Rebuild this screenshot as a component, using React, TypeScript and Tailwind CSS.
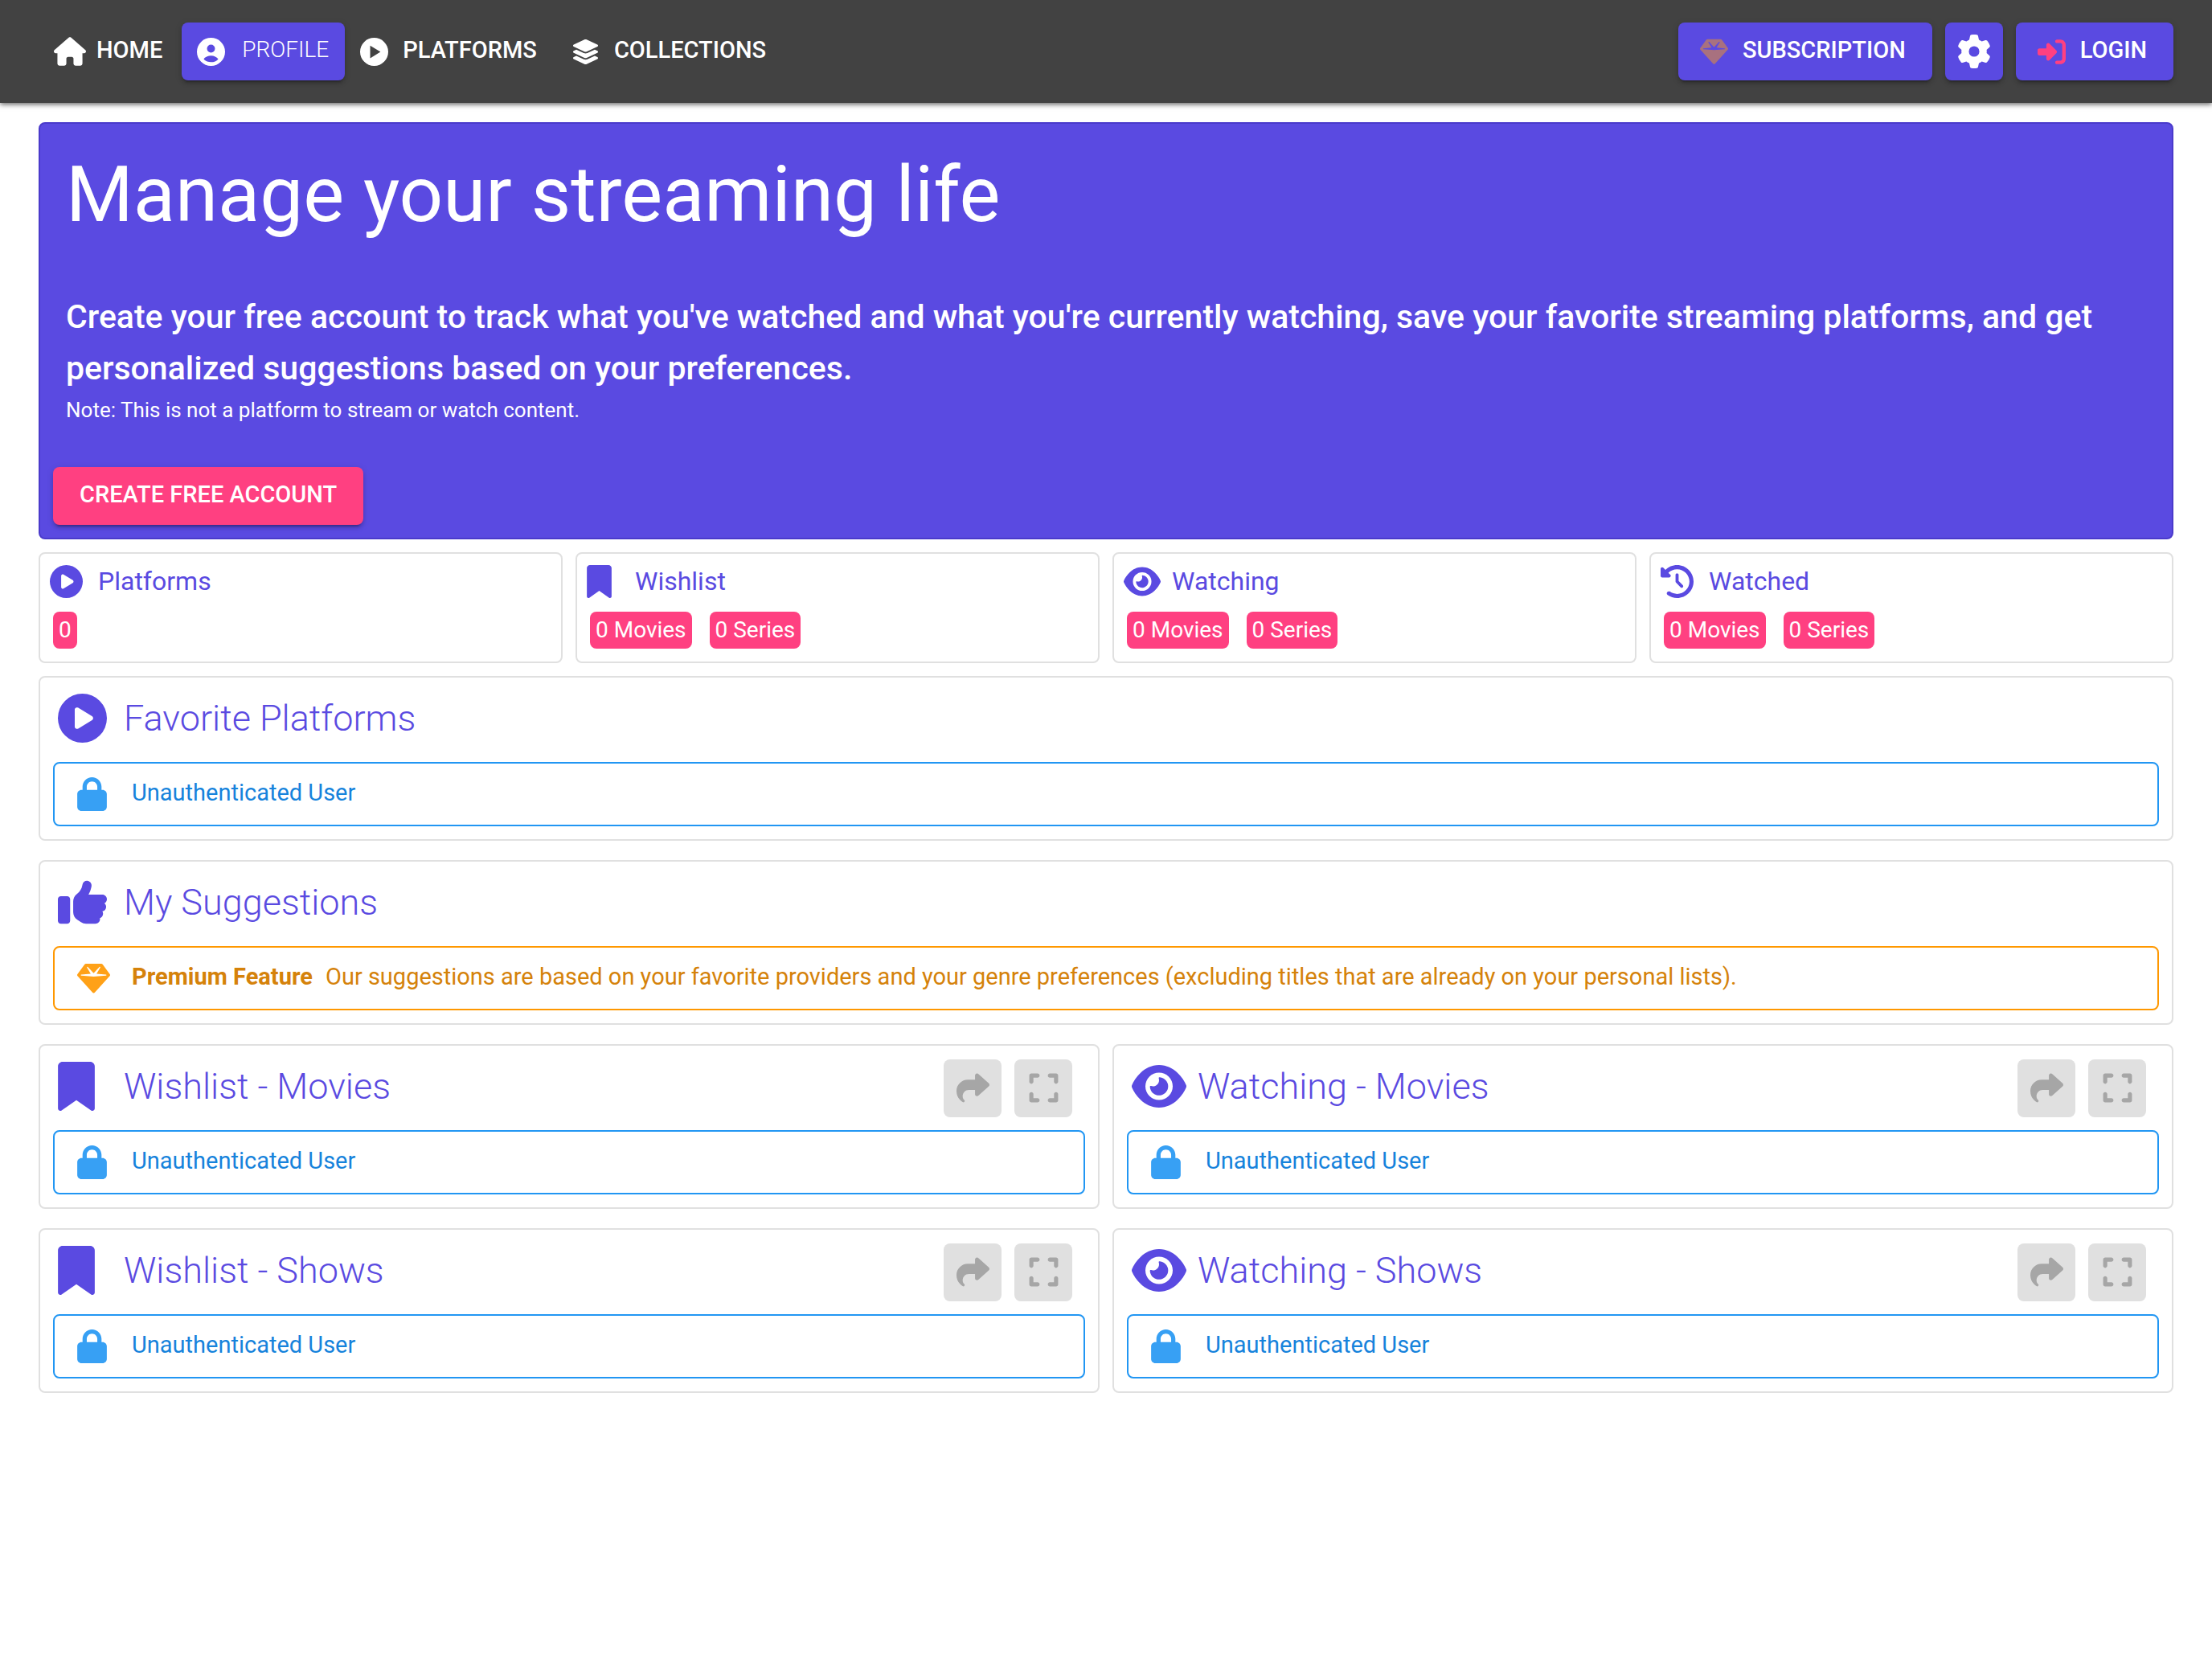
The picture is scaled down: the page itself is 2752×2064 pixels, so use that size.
import type { ReactNode } from "react";
import type { IconType } from "react-icons";
import {
  FaBookmark,
  FaCirclePlay,
  FaClockRotateLeft,
  FaExpand,
  FaEye,
  FaGear,
  FaGem,
  FaHouse,
  FaLayerGroup,
  FaLock,
  FaRightToBracket,
  FaShare,
  FaThumbsUp,
} from "react-icons/fa6";

const RAISED =
  "shadow-[0_6px_2px_-4px_rgba(0,0,0,0.2),0_4px_4px_0_rgba(0,0,0,0.14),0_2px_10px_0_rgba(0,0,0,0.12)]";

function ProfileIcon({ className }: { className?: string }) {
  return (
    <svg viewBox="0 0 24 24" fill="currentColor" className={className} aria-hidden="true">
      <path
        fillRule="evenodd"
        d="M12 0a12 12 0 1 0 0 24a12 12 0 1 0 0-24ZM12 5.8a3.4 3.4 0 1 1 0 6.8a3.4 3.4 0 1 1 0-6.8ZM12 15.2c2.6 0 4.9 1.1 6.2 2.9c-1.4 1.7-3.7 2.7-6.2 2.7s-4.8-1-6.2-2.7c1.3-1.8 3.6-2.9 6.2-2.9Z"
      />
    </svg>
  );
}

function PlayIcon({ className }: { className?: string }) {
  return (
    <svg viewBox="0 0 24 24" fill="currentColor" className={className} aria-hidden="true">
      <path fillRule="evenodd" d="M12 0a12 12 0 1 0 0 24a12 12 0 1 0 0-24ZM8.6 6.6v10.8L17.4 12Z" />
    </svg>
  );
}

function NavLink({ icon, label, active }: { icon: ReactNode; label: string; active?: boolean }) {
  return (
    <a
      href={"#" + label.toLowerCase()}
      aria-current={active ? "page" : undefined}
      className={
        active
          ? `flex h-18 items-center rounded-lg bg-[#5a4ae1] pl-[19px] pr-5 text-[28px] font-light ${RAISED}`
          : "flex h-18 items-center rounded-lg pl-[19px] pr-6 font-medium"
      }
    >
      <span className={active ? "flex w-14 items-center" : "flex w-[53px] items-center"}>{icon}</span>
      <span className="pb-1">{label}</span>
    </a>
  );
}

type StatProps = { icon: IconType; iconSize: string; title: string; chips: string[] };

function StatCard({ icon: Icon, iconSize, title, chips }: StatProps) {
  return (
    <section className="flex h-[138px] flex-col rounded-lg border-2 border-[#e0e0e0] bg-white pl-3">
      <div className="flex h-17 items-center">
        <span className="flex w-[60px] items-center">
          <Icon className={iconSize} />
        </span>
        <h2 className="text-[32px] leading-10">{title}</h2>
      </div>
      <div className="flex gap-[22px] pl-1 pt-1">
        {chips.map((chip) => (
          <span key={chip} className="h-[46px] rounded-lg bg-[#ff4081] px-[7px] text-[28px] leading-[46px] text-white">
            {chip}
          </span>
        ))}
      </div>
    </section>
  );
}

function Alert({ tone, icon, children }: { tone: "info" | "warning"; icon: ReactNode; children: ReactNode }) {
  return (
    <div
      role="status"
      className={
        tone === "info"
          ? "flex h-20 items-center rounded-lg border-2 border-[#2196f3] pl-7 text-[#1683dc]"
          : "flex h-20 items-center rounded-lg border-2 border-[#ff9800] pl-7 text-[#d5820a]"
      }
    >
      <span className={tone === "info" ? "flex w-[68px] text-[#37a0f4]" : "flex w-[68px] text-[#ffa117]"}>{icon}</span>
      <p className="pb-1 text-[29px] leading-10">{children}</p>
    </div>
  );
}

type PanelProps = { icon: IconType; iconSize: string; title: string; actions?: boolean; children: ReactNode };

function Panel({ icon: Icon, iconSize, title, actions, children }: PanelProps) {
  return (
    <section className="rounded-lg border-2 border-[#e0e0e0] bg-white px-4 pb-4">
      <div className="flex h-[105px] items-center justify-between">
        <div className="flex items-center pb-1 pl-[6px]">
          <span className="flex w-[82px] items-center">
            <Icon className={iconSize} />
          </span>
          <h2 className="text-[45px] font-light leading-16">{title}</h2>
        </div>
        {actions && (
          <div className="flex gap-4 pr-4">
            <button
              type="button"
              disabled
              aria-label={"Share " + title}
              className="flex size-18 items-center justify-center rounded-lg bg-[#e0e0e0] text-[#a6a6a6]"
            >
              <FaShare className="size-[41px]" />
            </button>
            <button
              type="button"
              disabled
              aria-label={"Expand " + title}
              className="flex size-18 items-center justify-center rounded-lg bg-[#e0e0e0] text-[#a6a6a6]"
            >
              <FaExpand className="size-[41px]" />
            </button>
          </div>
        )}
      </div>
      {children}
    </section>
  );
}

function LockedAlert() {
  return (
    <Alert tone="info" icon={<FaLock className="h-[42px] w-[37px]" />}>
      Unauthenticated User
    </Alert>
  );
}

const stats: StatProps[] = [
  { icon: FaCirclePlay, iconSize: "size-[41px]", title: "Platforms", chips: ["0"] },
  { icon: FaBookmark, iconSize: "h-[41px] w-[31px]", title: "Wishlist", chips: ["0 Movies", "0 Series"] },
  { icon: FaEye, iconSize: "h-[41px] w-[46px]", title: "Watching", chips: ["0 Movies", "0 Series"] },
  { icon: FaClockRotateLeft, iconSize: "size-[41px]", title: "Watched", chips: ["0 Movies", "0 Series"] },
];

const lists = [
  { icon: FaBookmark, iconSize: "h-[61px] w-[46px]", title: "Wishlist - Movies" },
  { icon: FaEye, iconSize: "h-[61px] w-[68px]", title: "Watching - Movies" },
  { icon: FaBookmark, iconSize: "h-[61px] w-[46px]", title: "Wishlist - Shows" },
  { icon: FaEye, iconSize: "h-[61px] w-[68px]", title: "Watching - Shows" },
];

export default function App() {
  return (
    <div className="min-h-screen bg-white font-[Roboto,sans-serif] text-[#5a4ae1]">
      <header className="flex h-32 items-center justify-between bg-[#424242] px-12 text-[29px] leading-10 text-white shadow-[0_2px_6px_rgba(0,0,0,0.6)]">
        <nav className="flex items-center">
          <NavLink icon={<FaHouse className="h-9 w-10" />} label="HOME" />
          <NavLink icon={<ProfileIcon className="size-[35px]" />} label="PROFILE" active />
          <NavLink icon={<PlayIcon className="size-[35px]" />} label="PLATFORMS" />
          <NavLink icon={<FaLayerGroup className="size-[35px]" />} label="COLLECTIONS" />
        </nav>
        <div className="flex items-center gap-4 font-medium">
          <button type="button" className={`flex h-18 items-center gap-[18px] rounded-lg bg-[#5a4ae1] pl-[27px] pr-[33px] ${RAISED}`}>
            <FaGem className="size-[35px] text-[#a8717f]" />
            <span className="pb-1">SUBSCRIPTION</span>
          </button>
          <button
            type="button"
            aria-label="Settings"
            className={`flex size-18 items-center justify-center rounded-lg bg-[#5a4ae1] ${RAISED}`}
          >
            <FaGear className="size-[42px]" />
          </button>
          <button type="button" className={`flex h-18 items-center gap-[18px] rounded-lg bg-[#5a4ae1] pl-[27px] pr-[33px] ${RAISED}`}>
            <FaRightToBracket className="size-[35px] text-[#ff4081]" />
            <span className="pb-1">LOGIN</span>
          </button>
        </div>
      </header>

      <main className="flex flex-col px-12 pt-6">
        <section className="rounded-lg border-2 border-[#4a3acb] bg-[#5a4ae1] px-4 pb-4 text-white">
          <div className="px-4 pt-8">
            <h1 className="text-8xl leading-[112px]">Manage your streaming life</h1>
            <p className="pt-16 text-[41px] font-medium leading-16">
              Create your free account to track what you've watched and what you're currently watching, save your favorite
              streaming platforms, and get personalized suggestions based on your preferences.
            </p>
            <p className="text-[26px] leading-10">Note: This is not a platform to stream or watch content.</p>
          </div>
          <button
            type="button"
            className={`mt-[51px] flex h-18 items-center rounded-lg bg-[#ff4081] px-[33px] text-[29px] font-medium leading-10 ${RAISED}`}
          >
            <span className="pb-1">CREATE FREE ACCOUNT</span>
          </button>
        </section>

        <div className="grid grid-cols-4 gap-4 pt-4">
          {stats.map((stat) => (
            <StatCard key={stat.title} {...stat} />
          ))}
        </div>

        <div className="flex flex-col gap-6 pt-4">
          <Panel icon={FaCirclePlay} iconSize="size-[61px]" title="Favorite Platforms">
            <LockedAlert />
          </Panel>
          <Panel icon={FaThumbsUp} iconSize="size-[61px]" title="My Suggestions">
            <Alert tone="warning" icon={<FaGem className="size-[41px]" />}>
              <strong className="mr-4 font-bold">Premium Feature</strong>
              Our suggestions are based on your favorite providers and your genre preferences (excluding titles that are
              already on your personal lists).
            </Alert>
          </Panel>
          <div className="grid grid-cols-2 gap-x-4 gap-y-6">
            {lists.map((list) => (
              <Panel key={list.title} {...list} actions>
                <LockedAlert />
              </Panel>
            ))}
          </div>
        </div>
      </main>
    </div>
  );
}
